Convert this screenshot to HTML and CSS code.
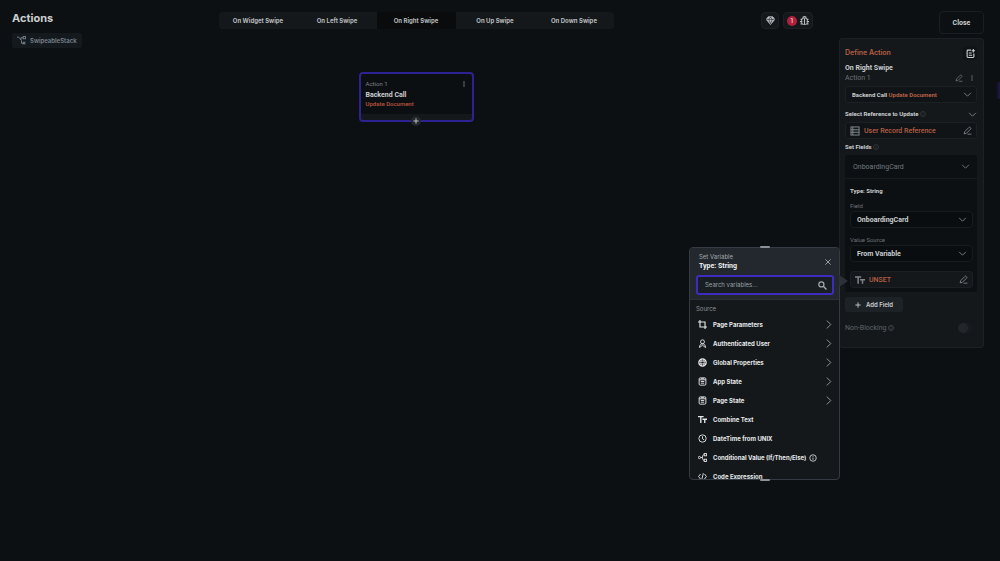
FILE: index.html
```html
<!DOCTYPE html>
<html lang="en">
<head>
    <meta charset="UTF-8">
    <meta name="viewport" content="width=device-width, initial-scale=1.0">
    <title>Actions</title>
    <link rel="stylesheet" href="styles.css">
</head>
<body>
<svg class="sprite" aria-hidden="true">
    <symbol id="chevron-down" viewBox="0 0 16 16"><path d="M2 5l6 6 6-6"/></symbol>
    <symbol id="chevron-right" viewBox="0 0 16 16"><path d="M5 1l7 7-7 7"/></symbol>
    <symbol id="info" viewBox="0 0 16 16"><circle cx="8" cy="8" r="6.500"/><path d="M8 7v4.500M8 4v1.500"/></symbol>
    <symbol id="pencil" viewBox="0 0 16 16"><path d="M2 14l1-4 7.500-7.500a1.500 1.500 0 0 1 2.200 0l.8.8a1.500 1.500 0 0 1 0 2.200L6 13zM8 14.500h7"/></symbol>
    <symbol id="dots" viewBox="0 0 16 16"><g fill="currentColor" stroke="none"><circle cx="8" cy="2.500" r="2"/><circle cx="8" cy="8" r="2"/><circle cx="8" cy="13.500" r="2"/></g></symbol>
    <symbol id="plus" viewBox="0 0 16 16"><path d="M8 1v14M1 8h14" stroke-width="2.400"/></symbol>
    <symbol id="text" viewBox="0 0 16 16"><path d="M0 3h10M5 3v11M8 7.500h8M12 7.500V14" stroke-width="2.400"/></symbol>
    <symbol id="state" viewBox="0 0 16 16"><rect x="2" y="1.500" width="12" height="13" rx="2"/><path d="M2 5h12M5 8h6M5 11h6M5 3h6"/></symbol>
</svg>

<div class="app">
    <main class="workspace">
        <header class="topbar">
            <div class="heading">
                <h1>Actions</h1>
                <span class="crumb">
                    <svg class="icon" viewBox="0 0 16 16"><path d="M0 2h3l5 6v5h3M7 7V3h4"/><rect x="11" y="1" width="4" height="4"/><rect x="11" y="11" width="3" height="3"/></svg>
                    SwipeableStack
                </span>
            </div>
            <nav class="tabs">
                <button type="button" class="tab">On Widget Swipe</button>
                <button type="button" class="tab">On Left Swipe</button>
                <button type="button" class="tab active">On Right Swipe</button>
                <button type="button" class="tab">On Up Swipe</button>
                <button type="button" class="tab">On Down Swipe</button>
            </nav>
            <div class="tools">
                <button type="button" class="tool" aria-label="Optimize">
                    <svg class="icon" viewBox="0 0 16 16"><path d="M4 1.500h8l3.500 4.500L8 15 .5 6z" fill="currentColor"/><path d="M1 6h14M5 6l3 8 3-8M5 6l3-4 3 4" stroke="#14181b" stroke-width="1"/></svg>
                </button>
                <button type="button" class="tool issues" aria-label="Issues">
                    <span class="count">1</span>
                    <svg class="icon" viewBox="0 0 16 16"><rect x="3" y="4" width="10" height="11" rx="3"/><path d="M5 4a3 3 0 0 1 6 0M8 5v10M1 6h3M12 6h3M0 10h4M12 10h4M1 14h3M12 14h3" stroke-width="2"/></svg>
                </button>
            </div>
        </header>

        <section class="canvas">
            <article class="node">
                <div class="node-top">
                    <span>Action 1</span>
                    <button type="button" class="bare" aria-label="More"><svg class="icon small"><use href="#dots"/></svg></button>
                </div>
                <h2>Backend Call</h2>
                <p>Update Document</p>
                <button type="button" class="node-add" aria-label="Add action"><svg class="icon small"><use href="#plus"/></svg></button>
            </article>
        </section>
    </main>

    <aside class="sidebar">
        <button type="button" class="close-btn">Close</button>

        <section class="panel">
            <div class="panel-head">
                <h2>Define Action</h2>
                <button type="button" class="note-btn" aria-label="Add note">
                    <svg class="icon" viewBox="0 0 16 16"><path d="M9 2H3.500A1.500 1.500 0 0 0 2 3.500v10A1.500 1.500 0 0 0 3.500 15h9a1.500 1.500 0 0 0 1.500-1.500V8M5 7h5M5 11h6M13 0v6M10 3h6" stroke-width="2"/></svg>
                </button>
            </div>
            <h3>On Right Swipe</h3>
            <div class="line muted">
                <span>Action 1</span>
                <span class="line-tools">
                    <button type="button" class="bare" aria-label="Rename"><svg class="icon edit"><use href="#pencil"/></svg></button>
                    <button type="button" class="bare" aria-label="More"><svg class="icon small"><use href="#dots"/></svg></button>
                </span>
            </div>
            <button type="button" class="field action-type">
                <span>Backend Call <em>Update Document</em></span>
                <svg class="icon"><use href="#chevron-down"/></svg>
            </button>

            <div class="line label-line">
                <span>Select Reference to Update <svg class="icon small dim"><use href="#info"/></svg></span>
                <svg class="icon fold"><use href="#chevron-down"/></svg>
            </div>
            <button type="button" class="field reference">
                <svg class="icon large" viewBox="0 0 16 16"><rect x="1.500" y="1.500" width="13" height="13"/><path d="M1.500 6h13M1.500 10h13M4.500 1.500v13"/></svg>
                <em>User Record Reference</em>
                <svg class="icon"><use href="#pencil"/></svg>
            </button>

            <div class="line set-fields"><span>Set Fields <svg class="icon small dim"><use href="#info"/></svg></span></div>
            <div class="card">
                <button type="button" class="card-head">
                    OnboardingCard
                    <svg class="icon"><use href="#chevron-down"/></svg>
                </button>
                <div class="card-body">
                    <h4>Type: String</h4>
                    <label for="field">Field</label>
                    <div class="select">
                        <select id="field"><option>OnboardingCard</option></select>
                        <svg class="icon"><use href="#chevron-down"/></svg>
                    </div>
                    <label for="source">Value Source</label>
                    <div class="select">
                        <select id="source"><option>From Variable</option></select>
                        <svg class="icon"><use href="#chevron-down"/></svg>
                    </div>
                    <button type="button" class="field variable">
                        <svg class="icon large"><use href="#text"/></svg>
                        <em>UNSET</em>
                        <svg class="icon"><use href="#pencil"/></svg>
                    </button>
                </div>
            </div>
            <button type="button" class="add-btn"><svg class="icon small"><use href="#plus"/></svg>Add Field</button>
            <div class="line non-blocking">
                <label for="blocking">Non-Blocking <svg class="icon small"><use href="#info"/></svg></label>
                <input type="checkbox" id="blocking" class="switch">
            </div>
        </section>

        <section class="popover">
            <div class="popover-head">
                <div class="popover-title">
                    <div>
                        <p>Set Variable</p>
                        <h3>Type: String</h3>
                    </div>
                    <button type="button" class="bare" aria-label="Close"><svg class="icon small" viewBox="0 0 16 16"><path d="M1 1l14 14M15 1L1 15" stroke-width="2.400"/></svg></button>
                </div>
                <div class="search">
                    <input type="text" placeholder="Search variables..." aria-label="Search variables" autofocus>
                    <svg class="icon" viewBox="0 0 16 16"><circle cx="6" cy="6" r="4.500" stroke-width="2.200"/><path d="M9.500 9.500L15 15" stroke-width="2.400"/></svg>
                </div>
            </div>
            <div class="popover-list">
                <p>Source</p>
                <button type="button" class="item">
                    <svg class="icon" viewBox="0 0 16 16"><path d="M3.500 0v12.500H16M0 3.500h12.500V16" stroke-width="2"/></svg>
                    Page Parameters
                    <svg class="icon go"><use href="#chevron-right"/></svg>
                </button>
                <button type="button" class="item">
                    <svg class="icon" viewBox="0 0 16 16"><circle cx="8" cy="5" r="3.500"/><path d="M2.500 15.500c0-4 2-7 5.500-7s5.500 3 5.500 7M3 15l5-4 5 4"/></svg>
                    Authenticated User
                    <svg class="icon go"><use href="#chevron-right"/></svg>
                </button>
                <button type="button" class="item">
                    <svg class="icon" viewBox="0 0 16 16"><circle cx="8" cy="8" r="6.500" stroke-width="2.200"/><path d="M1.500 5.500h13M1.500 10.500h13M6.500 2c-2 4-2 8 0 12M9.500 2c2 4 2 8 0 12"/></svg>
                    Global Properties
                    <svg class="icon go"><use href="#chevron-right"/></svg>
                </button>
                <button type="button" class="item">
                    <svg class="icon"><use href="#state"/></svg>
                    App State
                    <svg class="icon go"><use href="#chevron-right"/></svg>
                </button>
                <button type="button" class="item">
                    <svg class="icon"><use href="#state"/></svg>
                    Page State
                    <svg class="icon go"><use href="#chevron-right"/></svg>
                </button>
                <button type="button" class="item">
                    <svg class="icon"><use href="#text"/></svg>
                    Combine Text
                </button>
                <button type="button" class="item">
                    <svg class="icon" viewBox="0 0 16 16"><circle cx="8" cy="8" r="6.500"/><path d="M8 4v4.500l3 2"/></svg>
                    DateTime from UNIX
                </button>
                <button type="button" class="item">
                    <svg class="icon" viewBox="0 0 16 16"><circle cx="2.500" cy="8" r="2"/><path d="M4.500 8H8M8 8c0-4 1-5 3-5M8 8c0 4 1 5 3 5"/><rect x="11" y="1" width="4" height="4"/><rect x="11" y="11" width="4" height="4"/></svg>
                    <span class="hint">
                        Conditional Value (If/Then/Else)
                        <svg class="icon"><use href="#info"/></svg>
                    </span>
                </button>
                <button type="button" class="item">
                    <svg class="icon" viewBox="0 0 16 16"><path d="M4.500 3.500L1 8l3.500 4.500M11.500 3.500L15 8l-3.500 4.500M9.500 2l-3 12"/></svg>
                    Code Expression
                </button>
            </div>
        </section>
    </aside>
</div>
<div class="edge-glow"></div>
</body>
</html>
```
FILE: styles.css
```css
* {
    box-sizing: border-box;
}

body {
    position: relative;
    margin: 0;
    overflow-x: hidden;
    background: #0c1013;
    color: #cbced0;
    font-family: Roboto, sans-serif;
    font-size: 7px;
    line-height: 10px;
}

h1, h2, h3, h4, p {
    margin: 0;
}

button, input, select {
    font: inherit;
    color: inherit;
}

button {
    border: none;
    background: none;
    padding: 0;
    cursor: pointer;
}

em {
    color: #b75f44;
    font-style: normal;
}

.sprite {
    display: none;
}

.icon {
    width: 9px;
    height: 9px;
    flex: none;
    fill: none;
    stroke: currentColor;
    stroke-width: 1.6;
}

.icon.small {
    width: 6px;
    height: 6px;
}

.icon.large {
    width: 10px;
    height: 10px;
}

.icon.edit {
    width: 8px;
    height: 8px;
}

.dim {
    color: #42484d;
}

.bare {
    display: flex;
}

.app {
    display: grid;
    grid-template-columns: 1fr 145px;
    gap: 7px;
    min-height: 100vh;
    padding-right: 16px;
}

/* workspace */
.workspace {
    display: flex;
    flex-direction: column;
}

.topbar {
    display: grid;
    grid-template-columns: 1fr auto 1fr;
    align-items: start;
    padding: 12px 12px 0;
}

.heading {
    font-family: Inter, sans-serif;
}

.heading h1 {
    font-size: 11px;
    line-height: 13px;
    margin-bottom: 8px;
}

.crumb {
    display: inline-flex;
    align-items: center;
    gap: 4px;
    height: 15px;
    padding: 0 5px;
    border-radius: 2px;
    background: #14191d;
    color: #7b858e;
    font-size: 6px;
    font-weight: 600;
}

.tabs {
    display: flex;
    background: #14181b;
    border-radius: 3px;
    font-family: Inter, sans-serif;
}

.tab {
    width: 79px;
    height: 17px;
    color: #b8bbbd;
    font-size: 6px;
    font-weight: 700;
}

.tab.active {
    background: #090b0d;
}

.tools {
    display: flex;
    justify-content: flex-end;
    gap: 4px;
    padding-right: 7px;
}

.tool {
    display: flex;
    align-items: center;
    justify-content: center;
    gap: 3px;
    min-width: 18px;
    height: 17px;
    padding: 0 3px;
    border: 1px solid #1c2125;
    border-radius: 4px;
    background: #14181b;
    color: #b9bdc0;
}

.count {
    width: 10px;
    height: 10px;
    border-radius: 50%;
    background: #b0203c;
    color: #e6e6e6;
}

.canvas {
    display: flex;
    justify-content: center;
    padding-top: 24px;
}

.node {
    position: relative;
    width: 115px;
    height: 50px;
    padding: 5px;
    border: 2px solid #2d2292;
    border-radius: 4px;
    background: linear-gradient(#0c0f12 88%, #14181b 88%);
}

.node-top {
    display: flex;
    justify-content: space-between;
    align-items: center;
    margin-bottom: 1px;
    color: #7b8187;
    font-size: 6px;
}

.node h2 {
    font-size: 7px;
}

.node p {
    color: #b14f3c;
    font-size: 6px;
    line-height: 8px;
    font-weight: 600;
}

.node-add {
    position: absolute;
    left: 50%;
    bottom: -6px;
    display: flex;
    align-items: center;
    justify-content: center;
    width: 10px;
    height: 10px;
    margin-left: -5px;
    border-radius: 50%;
    background: #22272b;
}

/* right column */
.sidebar {
    position: relative;
    padding-top: 11px;
}

.close-btn {
    display: block;
    width: 45px;
    height: 23px;
    margin: 0 0 4px auto;
    border: 1px solid #1a1f23;
    border-radius: 4px;
    font-weight: 700;
}

.panel {
    padding: 7px 6px 14px 5px;
    border: 1px solid #1c2125;
    border-radius: 3px;
    background: #14181b;
}

.panel-head,
.line {
    display: flex;
    align-items: center;
    justify-content: space-between;
}

.panel-head h2 {
    color: #b75f44;
    font-family: Inter, sans-serif;
    font-size: 7px;
    font-weight: 600;
}

.panel h3 {
    margin-top: 3px;
    font-size: 7px;
}

.panel h4 {
    font-size: 6px;
}

.note-btn {
    display: flex;
    align-items: center;
    justify-content: center;
    width: 14px;
    height: 14px;
    border-radius: 3px;
    background: #0f1315;
}

.line {
    padding-right: 2px;
}

.muted {
    color: #6c7277;
}

.line-tools {
    display: flex;
    align-items: center;
    gap: 6px;
}

.field {
    display: flex;
    align-items: center;
    justify-content: space-between;
    width: 100%;
    height: 17px;
    padding: 0 4px;
    border: 1px solid #1b2024;
    border-radius: 3px;
    background: #101417;
    font-size: 6px;
    font-weight: 700;
}

.field .icon {
    color: #7d858b;
}

.field .large + em {
    flex: 1;
    margin-left: 4px;
    text-align: left;
}

.reference em,
.variable em {
    font-size: 7px;
    font-weight: 500;
}

.action-type {
    margin-top: 3px;
    padding-left: 6px;
}

.label-line {
    margin: 6px 0 3px;
}

.label-line,
.set-fields {
    font-size: 6px;
    font-weight: 700;
}

.line .icon {
    vertical-align: middle;
}

.label-line {
    padding-right: 0;
}

.line .fold {
    color: #7d858b;
}

.set-fields {
    margin: 3px 0;
}

.card {
    border-radius: 3px;
    background: #0c1013;
}

.card-head {
    display: flex;
    align-items: center;
    justify-content: space-between;
    width: 100%;
    height: 24px;
    padding: 0 7px 0 8px;
    border-bottom: 1px solid #171b1f;
    color: #737a80;
}

.card-body {
    padding: 7px 4px 4px 5px;
}

.card-body label {
    display: block;
    margin-top: 5px;
    color: #6c7277;
    font-size: 6px;
}

.select {
    position: relative;
    margin-bottom: 7px;
}

.select select {
    display: block;
    width: 100%;
    height: 17px;
    padding: 0 6px;
    appearance: none;
    border: 1px solid #171c1f;
    border-radius: 4px;
    background: #0a0d0f;
    font-weight: 700;
}

.select .icon {
    position: absolute;
    top: 4px;
    right: 6px;
    color: #7d858b;
    pointer-events: none;
}

.variable {
    margin-top: 9px;
    background: #14181b;
}

.add-btn {
    display: flex;
    align-items: center;
    justify-content: center;
    gap: 5px;
    width: 58px;
    height: 15px;
    margin: 5px 0 11px;
    border-radius: 2px;
    background: #1d2227;
    font-family: Inter, sans-serif;
    font-size: 6px;
    font-weight: 600;
}

.non-blocking {
    padding-right: 5px;
    color: #5d646a;
}

.switch {
    width: 14px;
    height: 10px;
    margin: 0;
    appearance: none;
    border-radius: 5px;
    background: radial-gradient(circle at 5px 5px, #22262a 5px, #171b1e 5px);
}

/* variable picker */
.popover {
    position: absolute;
    top: 247px;
    right: 144px;
    width: 151px;
    border: 1px solid #343b42;
    border-radius: 4px;
    background: #14181b;
}

.popover::before,
.popover::after {
    content: "";
    position: absolute;
    left: 50%;
    width: 10px;
    height: 2px;
    margin-left: -5px;
    border-radius: 1px;
    background: #8b9196;
}

.popover::before {
    top: -2px;
}

.popover::after {
    bottom: -2px;
}

.popover-head {
    position: relative;
    padding: 5px 5px 4px 6px;
    border-bottom: 1px solid #2b3137;
    border-radius: 3px 3px 0 0;
    background: #22282d;
}

.popover-head::after {
    content: "";
    position: absolute;
    top: 27px;
    left: 100%;
    border: 6px solid transparent;
    border-left: 9px solid #2b3137;
    border-right: 0;
}

.popover-title {
    display: flex;
    align-items: center;
    justify-content: space-between;
    padding: 0 3px;
    color: #a2a8ad;
}

.popover-title p,
.popover-list p {
    font-size: 6px;
    line-height: 8px;
}

.popover-title h3 {
    color: #f0f1f2;
    font-size: 7px;
}

.search {
    display: flex;
    align-items: center;
    height: 20px;
    margin-top: 4px;
    padding: 0 5px 0 7px;
    border: 2px solid #3d2cc0;
    border-radius: 3px;
    background: #191e22;
    color: #a2a8ad;
}

.search input {
    flex: 1;
    min-width: 0;
    padding: 0;
    border: none;
    outline: none;
    background: none;
    caret-color: #4b3ad6;
    font-size: 6px;
}

.search input::placeholder {
    color: #9aa1a6;
}

.popover-title p,
.search input,
.popover-list {
    font-family: Inter, sans-serif;
}

.popover-list {
    height: 179px;
    padding: 5px 6px 0;
    overflow: hidden;
}

.popover-list p {
    margin-bottom: 2px;
    color: #8d9499;
}

.item {
    display: flex;
    align-items: center;
    gap: 6px;
    width: 100%;
    height: 19px;
    padding: 0 0 0 2px;
    color: #e6e8ea;
    font-size: 6px;
    font-weight: 700;
    white-space: nowrap;
}

.item .go {
    margin-left: auto;
    color: #9a9fa3;
}

.hint {
    display: flex;
    align-items: center;
    gap: 3px;
}

.hint .icon {
    width: 8px;
    height: 8px;
}

.edge-glow {
    position: absolute;
    top: 82px;
    right: 0;
    width: 4px;
    height: 17px;
    border-radius: 4px 0 0 4px;
    background: linear-gradient(to right, #0c1013, #1f1850);
}
```
